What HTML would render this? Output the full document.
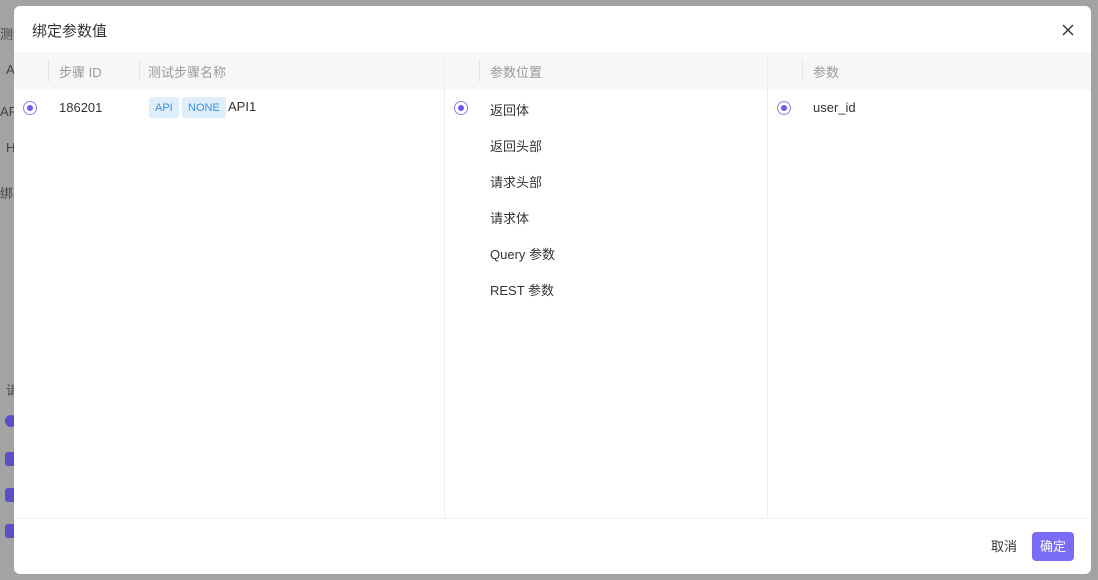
<!DOCTYPE html>
<html><head><meta charset="utf-8"><style>
*{margin:0;padding:0;box-sizing:border-box}
body{width:1098px;height:580px;overflow:hidden;background:#a3a3a3;font-family:"Liberation Sans","Noto Sans CJK SC",sans-serif;font-size:13px;color:#333;position:relative}
.bg{position:absolute;color:#444;font-size:13px}
.modal{position:absolute;left:14px;top:6px;width:1077px;height:568px;background:#fff;border-radius:6px;overflow:hidden}
.title{position:absolute;left:18px;top:14px;font-size:15px;color:#333}
.close{position:absolute;right:16px;top:17px;width:14px;height:14px}
.hdr{position:absolute;top:46px;height:38px;left:0;right:0;background:#f7f7f8}
.vl{position:absolute;top:46px;bottom:56px;width:1px;background:#eee}
.hsep{position:absolute;top:54px;width:1px;height:22px;background:#e6e6e6}
.ht{position:absolute;top:56px;color:#999;font-size:13px}
.t{position:absolute;font-size:13px;color:#333}
.radio{position:absolute;width:14px;height:14px;border:1px solid #8a7ef0;border-radius:50%}
.radio::after{content:"";position:absolute;left:3px;top:3px;width:6px;height:6px;border-radius:50%;background:#6b5cf0}
.tag{position:absolute;top:91px;height:21px;display:flex;align-items:center;padding:0 6px;background:#dfeefb;color:#3a8ee6;font-size:11px;border-radius:3px}
.foot{position:absolute;left:0;right:0;top:512px;height:1px;background:#f0f0f0}
.btn{position:absolute;top:526px;height:29px;line-height:29px;font-size:13px;border-radius:4px;padding:0 8px}
</style></head><body>
<div class="bg" style="left:0;top:24px">测试</div>
<div class="bg" style="left:6px;top:62px">A</div>
<div class="bg" style="left:0;top:104px">API</div>
<div class="bg" style="left:6px;top:140px">H</div>
<div class="bg" style="left:0;top:183px">绑</div>
<div class="bg" style="left:6px;top:380px">请</div>
<div style="position:absolute;left:5px;top:415px;width:12px;height:12px;border-radius:50%;border:1px solid #5b4fc8;background:#5b4fc8"></div>
<div style="position:absolute;left:5px;top:452px;width:12px;height:14px;border-radius:3px;background:#5b4fc8"></div>
<div style="position:absolute;left:5px;top:488px;width:12px;height:14px;border-radius:3px;background:#5b4fc8"></div>
<div style="position:absolute;left:5px;top:524px;width:12px;height:14px;border-radius:3px;background:#5b4fc8"></div>
<div class="modal">
<div class="title">绑定参数值</div>
<svg class="close" viewBox="0 0 14 14"><path d="M2 2L12 12M12 2L2 12" stroke="#333" stroke-width="1.4"/></svg>
<div class="hdr"></div>
<div class="vl" style="left:430px"></div>
<div class="vl" style="left:753px"></div>
<div class="hsep" style="left:34px"></div>
<div class="hsep" style="left:125px"></div>
<div class="hsep" style="left:465px"></div>
<div class="hsep" style="left:788px"></div>
<div class="ht" style="left:45px">步骤 ID</div>
<div class="ht" style="left:134px">测试步骤名称</div>
<div class="ht" style="left:476px">参数位置</div>
<div class="ht" style="left:799px">参数</div>
<div class="radio" style="left:9px;top:95px"></div>
<div class="t" style="left:45px;top:94px">186201</div>
<div class="tag" style="left:135px">API</div>
<div class="tag" style="left:168px">NONE</div>
<div class="t" style="left:214px;top:93px">API1</div>
<div class="radio" style="left:440px;top:95px"></div>
<div class="t" style="left:476px;top:94px">返回体</div>
<div class="t" style="left:476px;top:130px">返回头部</div>
<div class="t" style="left:476px;top:166px">请求头部</div>
<div class="t" style="left:476px;top:202px">请求体</div>
<div class="t" style="left:476px;top:238px">Query 参数</div>
<div class="t" style="left:476px;top:274px">REST 参数</div>
<div class="radio" style="left:763px;top:95px"></div>
<div class="t" style="left:799px;top:94px">user_id</div>
<div class="foot"></div>
<div class="btn" style="left:969px;color:#333">取消</div>
<div class="btn" style="left:1018px;background:#7b6cf6;color:#fff;width:42px;padding:0;text-align:center">确定</div>
</div>
</body></html>
